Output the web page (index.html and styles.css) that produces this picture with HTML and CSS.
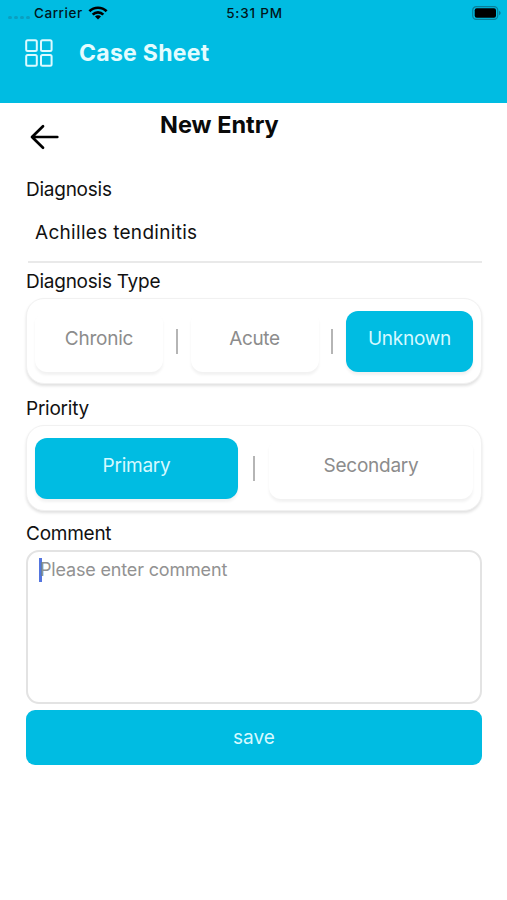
FILE: index.html
```html
<!DOCTYPE html>
<html lang="en">
<head>
<meta charset="utf-8">
<title>Case Sheet</title>
<link rel="stylesheet" href="styles.css">
</head>
<body>
<header class="header">
  <div class="status">
    <div class="status-left">
      <span class="signal"><i></i><i></i><i></i><i></i></span>
      <span class="carrier">Carrier</span>
      <svg class="wifi" width="20" height="14" viewBox="0 0 20 14"><g fill="none" stroke="#000" stroke-width="2.7"><path d="M1.4 5.3a12.2 12.2 0 0 1 17.2 0"/><path d="M4.7 8.6a7.5 7.5 0 0 1 10.6 0"/></g><path d="M10 13.6l-3-3a4.2 4.2 0 0 1 6 0z"/></svg>
    </div>
    <span class="time">5:31 PM</span>
    <svg class="battery" width="30" height="14" viewBox="0 0 30 14"><rect x="1.7" y=".7" width="25" height="12.6" rx="3.6" fill="none" stroke="#087f99" stroke-width="1.2"/><rect x="3.7" y="2.3" width="21.3" height="9.4" rx="2"/><path d="M28 4.8q1.7.8 1.7 2.2T28 9.2z" fill="#087f99"/></svg>
  </div>
  <div class="appbar">
    <svg class="menu" width="28" height="28" viewBox="0 0 28 28" fill="none" stroke="#dcfaff" stroke-width="2"><rect x="1.2" y="1.2" width="10.6" height="10.8" rx="1.5"/><rect x="16" y="1.2" width="10.6" height="10.8" rx="1.5"/><rect x="1.2" y="16" width="10.6" height="10.8" rx="1.5"/><rect x="16" y="16" width="10.6" height="10.8" rx="1.5"/></svg>
    <h1 class="app-title">Case Sheet</h1>
  </div>
</header>
<main class="main">
  <div class="page-head">
    <svg class="back" width="30" height="26" viewBox="0 0 30 26" fill="none" stroke="#000" stroke-width="2.7" stroke-linecap="round" stroke-linejoin="round"><path d="M27.3 13H2M13 2.2L2 13l11 10.8"/></svg>
    <h2 class="page-title">New Entry</h2>
  </div>
  <div class="label label-diagnosis">Diagnosis</div>
  <div class="diagnosis">Achilles tendinitis</div>
  <div class="label label-type">Diagnosis Type</div>
  <div class="group">
    <div class="option chronic">Chronic</div><span class="bar"></span>
    <div class="option acute">Acute</div><span class="bar"></span>
    <div class="option selected unknown">Unknown</div>
  </div>
  <div class="label label-priority">Priority</div>
  <div class="group">
    <div class="option selected primary">Primary</div><span class="bar"></span>
    <div class="option secondary">Secondary</div>
  </div>
  <div class="label label-comment">Comment</div>
  <div class="comment"><span class="caret"></span><span class="placeholder">Please enter comment</span></div>
  <div class="save">save</div>
</main>
</body>
</html>
```
FILE: styles.css
```css
* { box-sizing: border-box; }
body {
  margin: 0;
  height: 900px;
  background: #fff;
  color: #111;
  font-family: Inter, "Liberation Sans", sans-serif;
  font-size: 19px;
  overflow: hidden;
}
.header { height: 103px; background: #00bce2; }
.status {
  display: grid;
  grid-template-columns: 1fr auto 1fr;
  align-items: center;
  height: 26px;
  padding: 0 6px 0 8px;
  color: #00161b;
  font-size: 13.5px;
  font-weight: 500;
}
.status-left { display: flex; align-items: center; }
.signal { display: flex; gap: 2px; width: 26px; padding-top: 8px; }
.signal i { width: 4px; height: 3px; border-radius: 2px; background: #0a9fc0; }
.carrier { width: 54px; letter-spacing: .55px; }
.time { letter-spacing: .8px; }
.battery { justify-self: end; }
.appbar { display: flex; align-items: center; height: 54px; padding-left: 25px; }
.menu { margin-right: 26px; }
.app-title { margin: 0; font-size: 23px; font-weight: 700; letter-spacing: .28px; color: #e4fcff; }
.main { padding: 0 25px 0 26px; }
.page-head { display: flex; height: 70px; padding: 0 0 0 4px; align-items: flex-start; }
.back { margin-top: 21px; }
.page-title { margin: 6px 0 0 100px; font-size: 23.5px; font-weight: 700; line-height: 32px; color: #0a0a0a; }
.label { height: 24px; line-height: 26px; letter-spacing: -.25px; white-space: nowrap; }
.label-diagnosis { margin-top: 4px; }
.diagnosis { height: 62px; margin-left: 2px; padding: 7px; line-height: 50px; letter-spacing: .3px; border-bottom: 2px solid #e9e9e9; }
.label-type { margin: 6px 0 5px; }
.group {
  display: flex;
  align-items: center;
  justify-content: space-between;
  height: 86px;
  padding: 0 8px;
  border: 1px solid #f1f1f1;
  border-radius: 18px;
  background: #fff;
  box-shadow: 0 2px 3px rgba(0,0,0,.12);
}
.option {
  width: 128px;
  height: 61px;
  border-radius: 12px;
  background: #fff;
  box-shadow: 0 3px 3px rgba(0,0,0,.055);
  color: #8c8c8c;
  line-height: 55px;
  letter-spacing: -.25px;
  text-align: center;
}
.selected { background: #00bce2; color: #d5f9ff; }
.acute { letter-spacing: -.4px; }
.unknown { width: 127px; }
.primary { width: 203px; }
.secondary { width: 204px; }
.bar { width: 2px; height: 25px; background: #b5b5b5; }
.label-priority { margin: 12px 0 5px; }
.label-comment { margin: 10px 0 5px; }
.comment {
  display: flex;
  height: 154px;
  padding: 6px 11px;
  border: 2px solid #e3e3e3;
  border-radius: 13px;
  color: #929292;
  font-size: 18px;
  letter-spacing: -.17px;
}
.caret { width: 3px; height: 24px; margin-right: -2px; background: #5475df; }
.placeholder { line-height: 24px; }
.save { height: 55px; margin-top: 6px; border-radius: 9px; background: #00bce2; color: #d5f9ff; line-height: 55px; text-align: center; }
```
